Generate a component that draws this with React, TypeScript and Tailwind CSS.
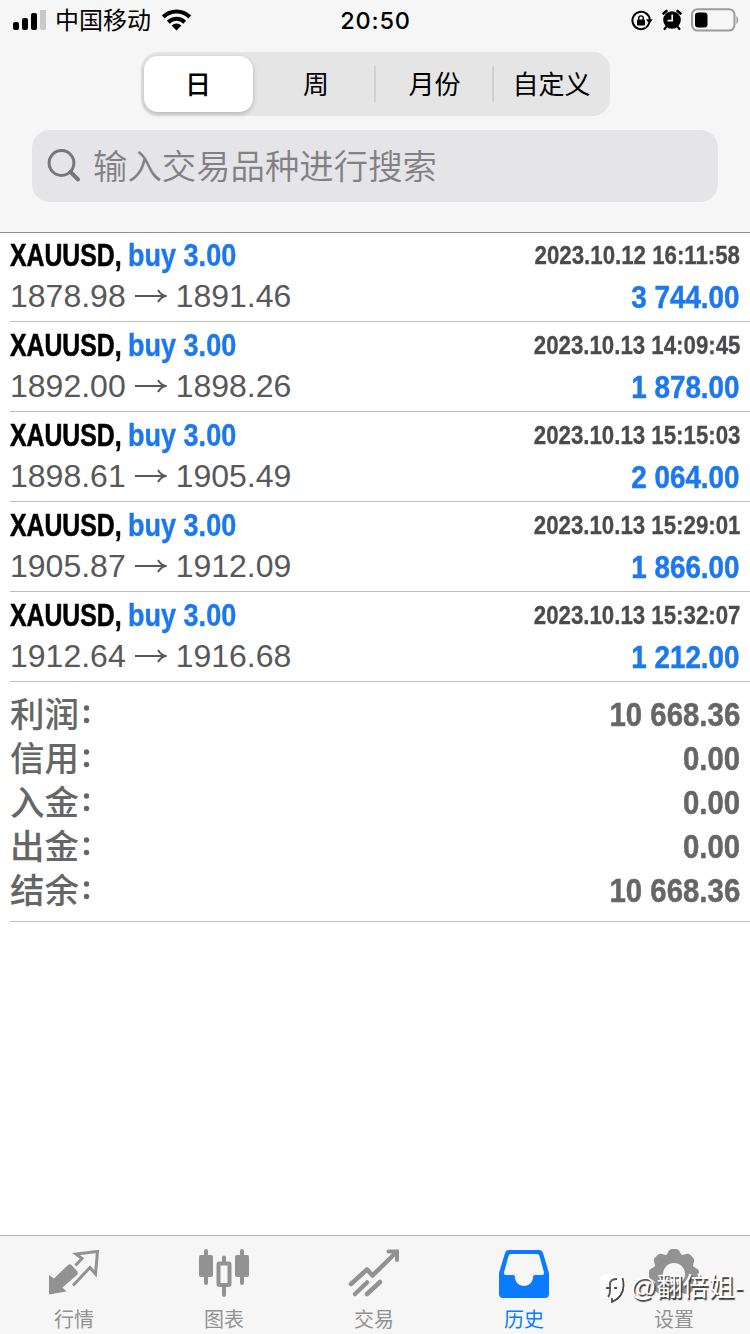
import React from "react";

const trades = [
  { open: "1878.98", close: "1891.46", time: "2023.10.12 16:11:58", profit: "3 744.00" },
  { open: "1892.00", close: "1898.26", time: "2023.10.13 14:09:45", profit: "1 878.00" },
  { open: "1898.61", close: "1905.49", time: "2023.10.13 15:15:03", profit: "2 064.00" },
  { open: "1905.87", close: "1912.09", time: "2023.10.13 15:29:01", profit: "1 866.00" },
  { open: "1912.64", close: "1916.68", time: "2023.10.13 15:32:07", profit: "1 212.00" },
];

const totals = [
  ["利润", "10 668.36"],
  ["信用", "0.00"],
  ["入金", "0.00"],
  ["出金", "0.00"],
  ["结余", "10 668.36"],
];

function StatusBar() {
  return (
    <div className="flex h-10 items-center justify-between pl-[13px] pr-[10px] text-black">
      <div className="flex w-[260px] items-center">
        <svg width="34" height="20" viewBox="0 0 34 20">
          <rect x="0" y="12" width="6" height="8" rx="2" />
          <rect x="9" y="8" width="6" height="12" rx="2" />
          <rect x="18" y="3" width="6" height="17" rx="2" />
          <rect x="27" y="-1" width="6" height="21" rx="2" fill="#c8c8c8" />
        </svg>
        <span className="ml-2 pt-[2px] text-[24px] leading-[38px]">中国移动</span>
        <svg className="ml-[10px]" width="31" height="22" viewBox="0 0 31 22">
          <path d="M15.5 21.5 10.6 16.6A7 7 0 0 1 20.4 16.6Z" />
          <path d="M7.3 13.2a11.7 11.7 0 0 1 16.4 0" fill="none" stroke="#000" strokeWidth="4" />
          <path d="M2.2 8a19 19 0 0 1 26.6 0" fill="none" stroke="#000" strokeWidth="4" />
        </svg>
      </div>
      <span className="pr-[2px] pt-[2px] font-[Inter] text-[23.5px] font-medium tracking-[0.8px]">20:50</span>
      <div className="flex w-[260px] items-center justify-end">
        <svg width="22" height="22" viewBox="0 0 22 22" className="mr-[9px] mt-[2px]">
          <path d="M14 18.2A8.7 8.7 0 1 1 18.8 9.5" fill="none" stroke="#000" strokeWidth="2" strokeLinecap="round" />
          <path d="M15.1 9.3h6.6l-3.3 4.6Z" />
          <path d="M18.2 13a8.7 8.7 0 0 1-3.4 4.7" fill="none" stroke="#000" strokeWidth="2" />
          <rect x="6" y="9.6" width="8" height="6" rx="1" />
          <path d="M7.7 10V8.2a2.3 2.3 0 0 1 4.6 0V10" fill="none" stroke="#000" strokeWidth="1.4" />
        </svg>
        <svg width="20" height="22" viewBox="0 0 20 22" className="mr-[9px]">
          <circle cx="10" cy="11" r="8.8" />
          <path d="M1.5 4.5 4.5 2M18.5 4.5 15.5 2" stroke="#000" strokeWidth="2.6" strokeLinecap="round" />
          <path d="M4.5 17.5 2.5 20M15.5 17.5 17.5 20" stroke="#000" strokeWidth="2.2" strokeLinecap="round" />
          <path d="M10.2 5.5v6.2H5.5" fill="none" stroke="#f6f6f6" strokeWidth="1.7" />
        </svg>
        <svg width="49" height="24" viewBox="0 0 49 24">
          <rect x="1" y="1.2" width="42.5" height="21.4" rx="5.5" fill="none" stroke="#9a9a9a" strokeWidth="2" />
          <rect x="4" y="4.5" width="12.5" height="15" rx="3.2" />
          <path d="M45.8 8.5q2.4 3.3 0 7Z" fill="#9a9a9a" stroke="#9a9a9a" strokeWidth=".6" />
        </svg>
      </div>
    </div>
  );
}

function Segments() {
  return (
    <div className="mx-auto mt-3 flex h-16 w-[469px] items-center rounded-[17px] bg-[#e5e5e6] text-[26px] text-black">
      <div className="ml-[3px] flex h-14 w-[109px] items-center justify-center rounded-[14px] bg-white pt-[2px] font-medium shadow-[0_2px_5px_rgba(0,0,0,0.22)]">日</div>
      <div className="flex flex-1 items-center justify-center pl-[6px] pt-[2px]">周</div>
      <div className="h-9 w-[2px] bg-[#d0d0d2]" />
      <div className="flex w-[116px] items-center justify-center pl-[2px] pt-[2px]">月份</div>
      <div className="h-9 w-[2px] bg-[#d0d0d2]" />
      <div className="flex w-[116px] items-center justify-center pt-[2px]">自定义</div>
    </div>
  );
}

function TradeRow({ t }: { t: (typeof trades)[number] }) {
  return (
    <div className="ml-[10px] h-[90px] border-b border-[#bdbdc0] pr-[10px] pt-[2px]">
      <div className="flex h-[42px] items-center">
        <div className="w-[118px] whitespace-nowrap text-[32px] font-bold text-black">
          <span className="inline-block origin-left scale-x-[0.775] [-webkit-text-stroke:0.6px]">XAUUSD,</span>
        </div>
        <div className="w-[120px] whitespace-nowrap text-[32px] font-bold text-[#1d78ee]">
          <span className="inline-block origin-left scale-x-[0.845] [-webkit-text-stroke:0.4px]">buy 3.00</span>
        </div>
        <div className="ml-auto whitespace-nowrap text-[26px] font-bold text-[#4b4b4d]">
          <span className="inline-block origin-right scale-x-[0.856] [-webkit-text-stroke:0.3px]">{t.time}</span>
        </div>
      </div>
      <div className="flex h-[41px] items-center justify-between">
        <div className="flex items-center gap-[9px] pb-px text-[32px] text-[#58585a]">
          <span>{t.open}</span>
          <svg width="32" height="16" viewBox="0 0 32 16" fill="none" stroke="#58585a" strokeWidth="1.9">
            <path d="M0 8H30M23 2Q25.5 6.5 30.5 8Q25.5 9.5 23 14" />
          </svg>
          <span>{t.close}</span>
        </div>
        <span className="origin-right scale-x-[0.87] whitespace-nowrap pt-px text-[32px] font-bold text-[#1d78ee] [-webkit-text-stroke:0.5px]">{t.profit}</span>
      </div>
    </div>
  );
}

const gearTeeth = [0, 45, 90, 135, 180, 225, 270, 315];

function Tab({ label, active, children }: { label: string; active?: boolean; children: React.ReactNode }) {
  return (
    <div className={active ? "flex w-[150px] flex-col items-center text-[#0a7aff]" : "flex w-[150px] flex-col items-center text-[#929292]"}>
      <svg width="52" height="52" viewBox="0 0 52 52" fill="currentColor" className="mt-[13px] shrink-0">
        {children}
      </svg>
      <span className="mt-[5px] text-[20px] leading-[28px]">{label}</span>
    </div>
  );
}

function TabBar() {
  return (
    <div className="relative mt-auto flex h-[99px] border-t border-[#b2b2b2] bg-[#f6f6f6]">
      <div className="-ml-px flex">
        <Tab label="行情">
          <path d="M1 26 6 29.5 20 16q2-1.5 4 .5l5 5.5q1.5 2 0 4L14.5 38.500 18.5 42.5Q10 44 1 45.5Z" />
          <path d="M27.5 16.5 34 9.5 28 5 49.5 2.5 47.5 25 42 18.5 25 36.5" fill="none" stroke="currentColor" strokeWidth="3" />
        </Tab>
        <Tab label="图表">
          <rect x="1" y="6" width="14" height="22" rx="2" />
          <path d="M8 2v32M44 2v32M26 8.500v37.500" stroke="currentColor" strokeWidth="4" strokeLinecap="round" />
          <rect x="37" y="6" width="14" height="22" rx="2" />
          <rect x="20.5" y="14.500" width="11" height="21.500" rx="1" fill="#f6f6f6" stroke="currentColor" strokeWidth="4" />
        </Tab>
        <Tab label="交易">
          <path d="M3 35 19 20.5 24.500 26.500 48 3.500" fill="none" stroke="currentColor" strokeWidth="4.500" strokeLinecap="round" strokeLinejoin="round" />
          <path d="M40.5 2.5H49V11" fill="none" stroke="currentColor" strokeWidth="4" strokeLinecap="round" />
          <path d="M7 45 19 33.5M19 45 32 33" stroke="currentColor" strokeWidth="4.500" strokeLinecap="round" />
        </Tab>
        <Tab label="历史" active>
          <path fillRule="evenodd" d="M11 1H41Q44 1 45 4L51 24V45Q51 49 47 49H5Q1 49 1 45V24L7 4Q8 1 11 1ZM13 5Q11 5 10.5 7L6 23.5Q5.5 26 8 26H15Q17 26 17 28C17 33 21 37 26 37S35 33 35 28Q35 26 37 26H44Q46.5 26 46 23.5L41.5 7Q41 5 39 5Z" />
        </Tab>
        <Tab label="设置">
          <mask id="gear-hole">
            <rect width="52" height="52" fill="white" />
            <circle cx="26" cy="25" r="11" fill="black" />
          </mask>
          <g mask="url(#gear-hole)">
            <circle cx="26" cy="25" r="20.5" />
            {gearTeeth.map((a) => (
              <path key={a} d="M17.500 7.500 21 1.500Q22 0 24 0H28Q30 0 31 1.500L34.500 7.500Z" transform={`rotate(${a} 26 25)`} />
            ))}
          </g>
        </Tab>
      </div>
      <div className="absolute left-[599px] top-[32px] flex w-[151px] items-center overflow-hidden whitespace-nowrap text-[26px] leading-[38px] text-white">
        <svg width="28" height="34" viewBox="0 0 28 34" className="shrink-0">
          <path d="M8 4H18Q25 5 25 14V19Q24 27 14 32V28H8Q1 27 1 19V12Q1 4 8 4Z" fill="white" />
          <path d="M23.5 8Q28 25 13 32V28" fill="none" stroke="#444" strokeWidth="1.7" />
          <path d="M9 27Q11 25 11 20V13Q12 9 18 9M7 18H12M15 18H18" fill="none" stroke="#555" strokeWidth="1.8" />
        </svg>
        <span className="ml-[3px] [text-shadow:1.5px_1.5px_1px_#333]">@翻倍姐-</span>
      </div>
    </div>
  );
}

export default function App() {
  return (
    <div className="flex h-[1334px] w-[750px] flex-col overflow-hidden bg-white font-['Liberation_Sans','Noto_Sans_CJK_SC',sans-serif]">
      <header className="h-[233px] shrink-0 border-b border-[#8f8f91] bg-[#f6f6f6]">
        <StatusBar />
        <Segments />
        <div className="mx-8 mt-[14px] flex h-[72px] items-center rounded-[18px] bg-[#e5e5e7] pl-[15px] text-[34.4px] font-[350] text-[#818184]">
          <svg width="34" height="36" viewBox="0 0 34 36" fill="none" stroke="#77777a" className="mr-3">
            <circle cx="14.5" cy="15" r="12.4" strokeWidth="3" />
            <path d="M23.5 24 31 31.5" strokeWidth="4" strokeLinecap="round" />
          </svg>
          <span className="pt-[3px]">输入交易品种进行搜索</span>
        </div>
      </header>
      <main className="-mt-px">
        {trades.map((t) => (
          <TradeRow key={t.time} t={t} />
        ))}
        <section className="ml-[10px] h-[240px] border-b border-[#bdbdc0] pr-[10px] pt-[10px] font-medium text-[#666667]">
          {totals.map(([label, value]) => (
            <div key={label} className="flex h-11 items-center justify-between">
              <span className="flex items-center pt-[3px] text-[34.5px]">
                {label}
                <svg width="18" height="30" viewBox="0 0 18 30" fill="currentColor">
                  <circle cx="7.5" cy="7" r="2.7" />
                  <circle cx="7.5" cy="19.5" r="2.7" />
                </svg>
              </span>
              <span className="origin-right scale-x-[0.865] whitespace-nowrap text-[34px] font-bold [-webkit-text-stroke:0.5px]">{value}</span>
            </div>
          ))}
        </section>
      </main>
      <TabBar />
    </div>
  );
}
